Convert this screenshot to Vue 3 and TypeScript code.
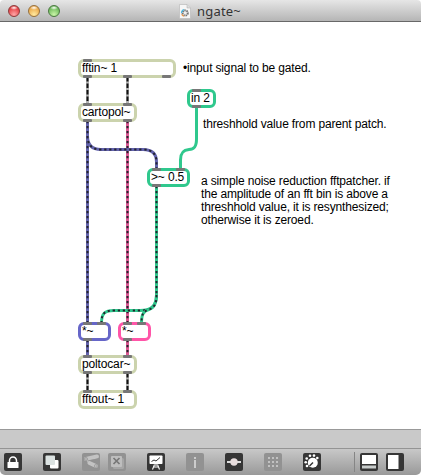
<script setup lang="ts">
interface PatchNode {
  text: string
  x: number
  y: number
  w: number
  kind: string
  inlets: number[]
  outlets: number[]
}

interface Cord {
  d: string
  kind: string
}

const nodes: PatchNode[] = [
  { text: 'fftin~ 1', x: 78, y: 59, w: 98, kind: 'plain', inlets: [5], outlets: [5, 45, 84] },
  { text: 'cartopol~', x: 78, y: 103, w: 59, kind: 'plain', inlets: [5, 45], outlets: [5, 45] },
  { text: 'in 2', x: 187, y: 89, w: 29, kind: 'green', inlets: [5], outlets: [5] },
  { text: '>~ 0.5', x: 147, y: 168, w: 43, kind: 'green', inlets: [5, 29], outlets: [5] },
  { text: '*~', x: 78, y: 322, w: 33, kind: 'blue', inlets: [5, 19], outlets: [5] },
  { text: '*~', x: 118, y: 322, w: 33, kind: 'pink', inlets: [5, 19], outlets: [5] },
  { text: 'poltocar~', x: 78, y: 355, w: 59, kind: 'plain', inlets: [5, 45], outlets: [5, 45] },
  { text: 'fftout~ 1', x: 78, y: 390, w: 59, kind: 'plain', inlets: [5, 45], outlets: [] },
]

const cords: Cord[] = [
  { d: 'M87.5 77V104', kind: 'light' },
  { d: 'M127.5 77V104', kind: 'light' },
  { d: 'M87.5 121V323', kind: 'blue' },
  { d: 'M127.5 121V323', kind: 'pink' },
  { d: 'M87.5 121V136C87.5 145 92 149.5 101 149.5H143C152 149.5 156.5 154 156.5 162V169', kind: 'blue' },
  { d: 'M156.5 186V295C156.5 306 151 310.5 140 310.5H114C105 310.5 101.5 313 101.5 323', kind: 'green' },
  { d: 'M156.5 295C156.5 304 154 308 149 309.5C143 311 141.5 315 141.5 323', kind: 'green' },
  { d: 'M87.5 340V356', kind: 'blue' },
  { d: 'M127.5 340V356', kind: 'pink' },
  { d: 'M87.5 373V391', kind: 'light' },
  { d: 'M127.5 373V391', kind: 'light' },
]

const dots = [5, 9, 13]
</script>

<template>
  <div class="window">
    <header class="titlebar">
      <span class="light red"></span>
      <span class="light amber"></span>
      <span class="light lime"></span>
      <div class="title">
        <svg width="12" height="15" viewBox="0 0 12 15">
          <path d="M.5.5H8L11.5 4V14.5H.5Z" fill="#f6f6f6" stroke="#bbb" stroke-width=".7" />
          <path d="M8 .5V4H11.5" fill="#ddd" stroke="#aaa" stroke-width=".5" />
          <circle cx="6.200" cy="9" r="2.600" fill="#eee" stroke="#777" stroke-width="2" stroke-dasharray="1.5 .7" />
          <path d="M2.500 9A3.500 3.500 0 0 1 5 5.700" fill="none" stroke="#4db8e0" stroke-width="1.200" />
          <path d="M2.700 10.200A3.500 3.500 0 0 0 5 12.200" fill="none" stroke="#e89a50" stroke-width="1.200" />
        </svg>
        <span>ngate~</span>
      </div>
    </header>

    <main class="patcher">
      <svg class="cords" width="421" height="407" viewBox="0 22 421 407" fill="none">
        <path d="M196.500 107V139C196.500 147 194 149.500 189 149.500C183 150 180.500 153 180.500 160V169" stroke="#2fc88d" stroke-width="3" />
        <g v-for="(cord, i) in cords" :key="i" :class="['cord', cord.kind + '-cord']">
          <path :d="cord.d" class="base" />
          <path :d="cord.d" class="dash" />
        </g>
      </svg>
      <div
        v-for="(node, i) in nodes"
        :key="i"
        :class="['node', node.kind]"
        :style="{ left: node.x + 'px', top: node.y - 22 + 'px', width: node.w + 'px' }"
      >
        <span class="label">{{ node.text }}</span>
        <i v-for="p in node.inlets" :key="'i' + p" class="port inlet" :style="{ left: p + 'px' }"></i>
        <i v-for="p in node.outlets" :key="'o' + p" class="port outlet" :style="{ left: p + 'px' }"></i>
      </div>
      <p class="comment input-note">•input signal to be gated.</p>
      <p class="comment threshold-note">threshhold value from parent patch.</p>
      <p class="comment about-note">a simple noise reduction fftpatcher. if<br />the amplitude of an fft bin is above a<br />threshhold value, it is resynthesized;<br />otherwise it is zeroed.</p>
    </main>

    <div class="status"></div>

    <footer class="toolbar">
      <svg class="tool lock" viewBox="0 0 18 18">
        <path d="M5.500 9V7.500a3.500 3.500 0 0 1 7 0V9" fill="none" stroke="#fff" stroke-width="1.500" />
        <rect x="3.500" y="9" width="11" height="6" rx=".5" fill="#fff" />
      </svg>
      <svg class="tool" viewBox="0 0 18 18">
        <rect x="7" y="7" width="8.500" height="8.500" rx="1" fill="#fff" />
        <rect x="2.500" y="2.500" width="9.500" height="9.500" rx="1" fill="#dce3e2" />
      </svg>
      <svg class="tool faded" viewBox="0 0 18 18">
        <path d="M4 6L15 3.500" stroke="#c3c3c3" stroke-width="4" stroke-linecap="round" />
        <path d="M2 4L7 11.500L9 9.500L6 6.500" fill="#b8b8b8" />
        <path d="M7.500 10L14 13" stroke="#c3c3c3" stroke-width="4" stroke-linecap="round" />
        <path d="M6 7.800L16 5.800" stroke="#929292" stroke-width=".7" />
        <circle cx="4" cy="6" r="1.600" fill="#b3b3b3" stroke="#929292" stroke-width=".6" />
        <circle cx="13.800" cy="13" r="1.500" fill="#bdbdbd" stroke="#929292" stroke-width=".6" />
      </svg>
      <svg class="tool faded near" viewBox="0 0 18 18">
        <rect x="5" y="5" width="11" height="11" rx="1.500" fill="#a6a6a6" />
        <rect x="3" y="3" width="11" height="11" rx="1" fill="#bebebe" />
        <path d="M5.500 5L11.500 11M11.500 5L5.500 11" stroke="#777" stroke-width="1.700" />
      </svg>
      <svg class="tool" viewBox="0 0 18 18" fill="none">
        <rect x="2.500" y="2.500" width="13" height="8.500" rx=".8" fill="#fff" />
        <path d="M4.500 8.500L7 7L9 8L13 4.500" stroke="#333" stroke-width="1" />
        <path d="M9 11V13M7.500 11.500L5.500 16.500M10.500 11.500L12.500 16.500M6.800 14H11" stroke="#fff" stroke-width="1.100" />
      </svg>
      <svg class="tool faded" viewBox="0 0 18 18">
        <path d="M8 4H10V6H8ZM8 7H10V15H8Z" fill="#ccc" />
      </svg>
      <svg class="tool" viewBox="0 0 18 18">
        <path d="M2 9H16" stroke="#ddd" stroke-width="2" />
        <circle cx="9" cy="9" r="3.700" fill="#e7dddd" />
      </svg>
      <svg class="tool faded" viewBox="0 0 18 18">
        <template v-for="y in dots" :key="y">
          <rect v-for="x in dots" :key="x" :x="x - 1" :y="y - 1" width="2" height="2" fill="#c2c2c2" />
        </template>
      </svg>
      <svg class="tool" viewBox="0 0 18 18">
        <g fill="#fff">
          <circle cx="9.800" cy="9.800" r="5" />
          <circle cx="2.700" cy="9.300" r="1.300" />
          <circle cx="3.700" cy="5.500" r="1.300" />
          <circle cx="7" cy="2.800" r="1.300" />
          <circle cx="11" cy="2.600" r="1.300" />
          <circle cx="14.300" cy="5" r="1.300" />
          <circle cx="4" cy="13" r="1.300" />
        </g>
        <path d="M6.500 13L10 9.500" stroke="#333" stroke-width="1.400" />
      </svg>
      <span class="divider"></span>
      <svg class="tool" viewBox="0 0 18 18">
        <path d="M2 2H16V11H2Z" fill="#fff" />
        <path d="M2 12.500H16V15.500H2Z" fill="#c8cccb" />
      </svg>
      <svg class="tool near" viewBox="0 0 18 18">
        <path d="M2 2H12.500V16H2Z" fill="#fff" />
      </svg>
    </footer>
  </div>
</template>

<style>
body { margin: 0; background: #fff; }
</style>

<style scoped>
.window {
  width: 421px;
  height: 475px;
  display: flex;
  flex-direction: column;
  overflow: hidden;
  background: #fff;
  font-family: "Liberation Sans", Arial, sans-serif;
}
.titlebar {
  box-sizing: border-box;
  height: 22px;
  flex: none;
  display: flex;
  align-items: center;
  gap: 8px;
  padding-left: 8px;
  border-bottom: 1px solid #686868;
  border-radius: 4px 4px 0 0;
  background: linear-gradient(#e6e6e6, #b5b5b5);
}
.light {
  box-sizing: border-box;
  width: 12px;
  height: 12px;
  border-radius: 50%;
  border: 1px solid;
}
.red { border-color: #8d3a3a; background: radial-gradient(ellipse 4px 2px at 50% 18%, #fff, transparent), radial-gradient(circle at 50% 85%, #ffa7a7, #e2383c 75%); }
.amber { border-color: #96703c; background: radial-gradient(ellipse 4px 2px at 50% 18%, #fff, transparent), radial-gradient(circle at 50% 85%, #ffeaa0, #e9a444 75%); }
.lime { border-color: #4a7840; background: radial-gradient(ellipse 4px 2px at 50% 18%, #fff, transparent), radial-gradient(circle at 50% 85%, #caf5a8, #68b656 75%); }
.title {
  display: flex;
  align-items: center;
  gap: 6px;
  margin-left: 111px;
  color: #333;
  font: 13px/20px "Noto Sans", "Open Sans", sans-serif;
  letter-spacing: 0.2px;
}
.title svg { margin-top: 2px; }
.patcher { position: relative; height: 407px; flex: none; }
.cords { display: block; }
.base { stroke-width: 3; }
.dash { stroke-width: 2; stroke-dasharray: 2.2 2.8; stroke: #24242e; }
.light-cord .base { stroke: #b4b4b4; }
.light-cord .dash { stroke: #111; stroke-dasharray: 4.5 2; }
.blue-cord .base { stroke: #6262ac; }
.pink-cord .base { stroke: #dc5893; }
.green-cord .base { stroke: #2fc88d; }
.node {
  position: absolute;
  box-sizing: border-box;
  height: 19px;
  border: 3px solid;
  border-radius: 6px;
  background: #fff;
}
.plain { border-color: #cbd3ad; }
.green { border-color: #2fc88d; }
.blue { border-color: #6666c8; }
.pink { border-color: #ff55a8; }
.label,
.comment {
  font-size: 12px;
  line-height: 13px;
  letter-spacing: -0.15px;
  white-space: nowrap;
  color: #000;
}
.label {
  display: block;
  margin-left: 1px;
}
.port {
  position: absolute;
  width: 9px;
  height: 3px;
  margin-left: -3px;
  border-radius: 1px;
  background: #777;
}
.inlet { top: -3px; }
.outlet { bottom: -3px; }
.comment {
  position: absolute;
  margin: 0;
}
.input-note { left: 183px; top: 40px; }
.threshold-note { left: 203px; top: 96px; }
.about-note { left: 201px; top: 153px; }
.status {
  box-sizing: border-box;
  height: 19px;
  flex: none;
  border-top: 1px solid #999;
  background: #c9c9c9;
}
.toolbar {
  box-sizing: border-box;
  height: 27px;
  flex: none;
  display: flex;
  align-items: flex-start;
  padding: 4px 0 0 4px;
  border-top: 1px solid #949494;
  border-radius: 0 0 5px 5px;
  background: linear-gradient(#c8c8c8, #999);
}
.tool {
  width: 18px;
  height: 18px;
  flex: none;
  margin-left: 21px;
  border-radius: 2px;
  background: #363636;
}
.tool.lock { margin-left: 0; }
.tool.near { margin-left: 8px; }
.tool.faded { background: #929292; }
.divider {
  width: 1px;
  height: 20px;
  margin: -1px -16px 0 33px;
  background: #858585;
}
</style>
